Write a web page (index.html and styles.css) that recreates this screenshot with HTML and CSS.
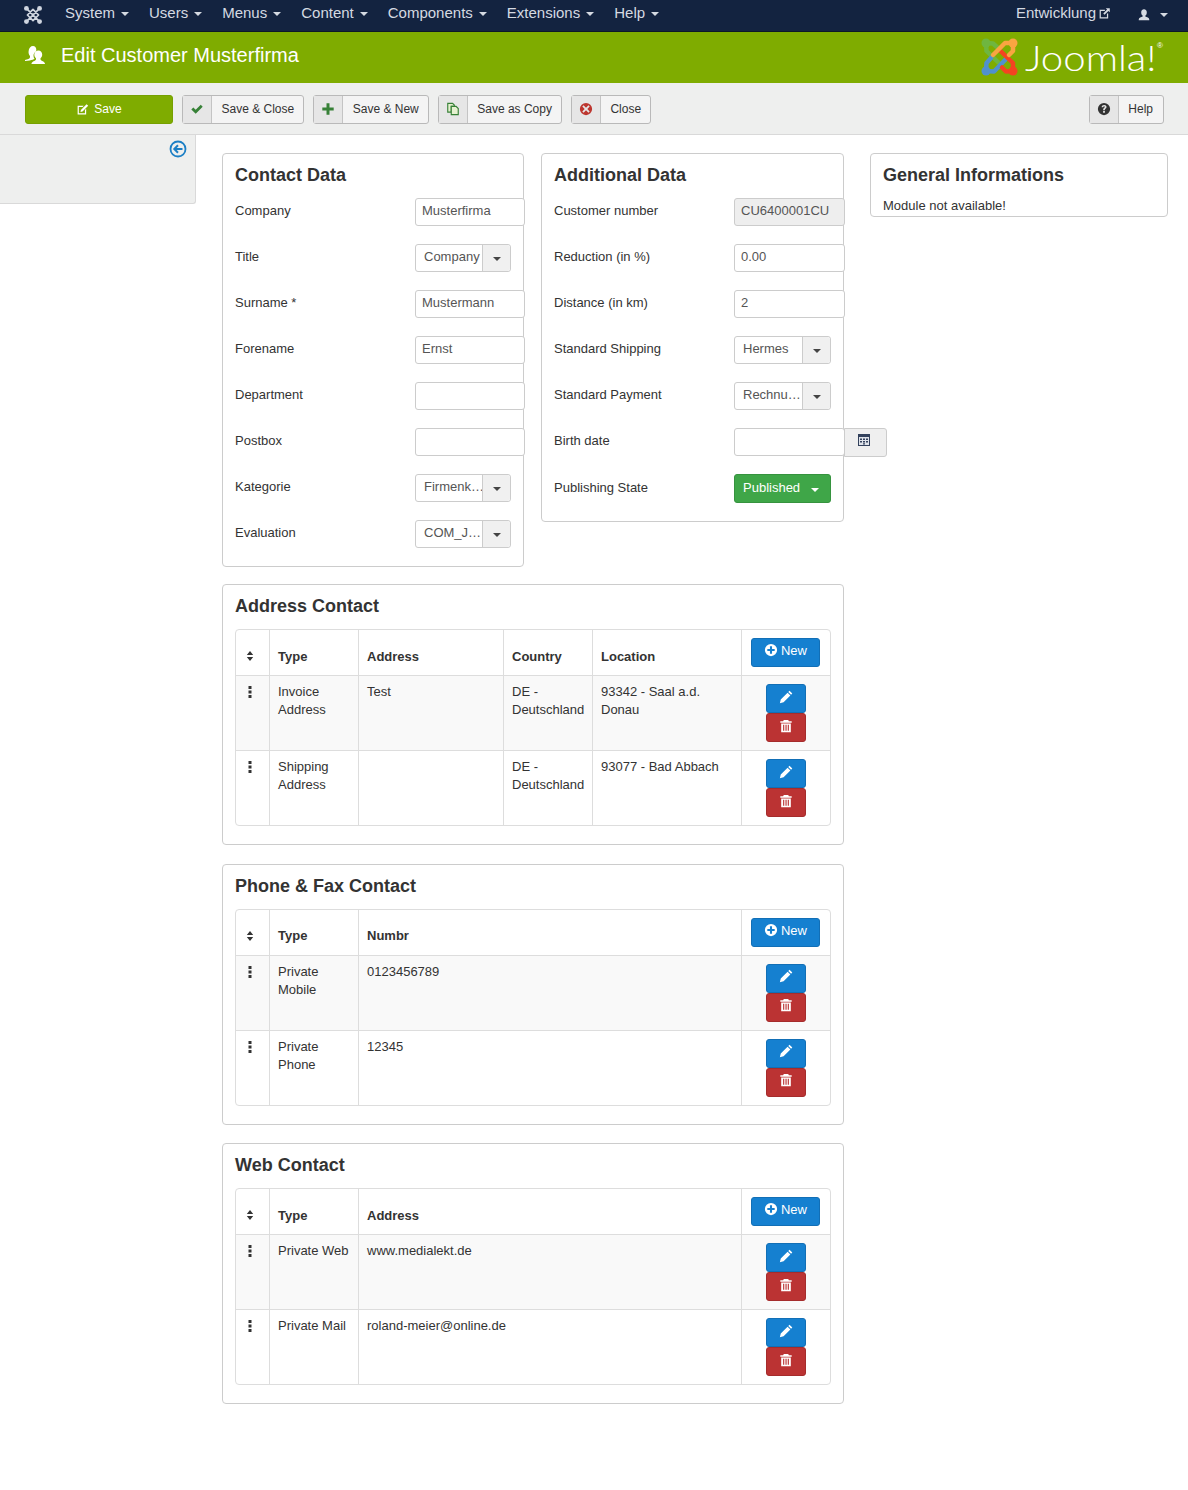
FILE: index.html
```html
<!DOCTYPE html>
<html lang="en">
<head>
<meta charset="utf-8">
<title>Edit Customer Musterfirma</title>
<link rel="stylesheet" href="styles.css">
</head>
<body>
<svg class="defs" aria-hidden="true">
  <symbol id="i-pen" viewBox="0 0 16 16"><path d="M12 .8 15.200 4 13.800 5.400 10.600 2.200zM9.800 3 13 6.200 5.200 14 1 15 2 10.800zM3 11.200 4.800 13 3 13.400 2.600 13z"/></symbol>
  <symbol id="i-trash" viewBox="0 0 16 16"><path d="M5.500 1h5l.8 1.600H14.500V4.200H1.500V2.600H4.700zM2.500 5H13.500V15H2.500zM4.700 6.500V13.500H6V6.500zM7.400 6.500V13.500H8.700V6.500zM10 6.500V13.500H11.300V6.500z" fill-rule="evenodd"/></symbol>
  <symbol id="i-plus-c" viewBox="0 0 16 16"><path fill-rule="evenodd" d="M8 1a7 7 0 1 0 0 14A7 7 0 0 0 8 1zM6.800 3.800H9.200V6.800H12.200V9.200H9.200V12.200H6.800V9.200H3.800V6.800H6.800z"/></symbol>
  <symbol id="i-sort" viewBox="0 0 8 10"><path d="M4 0 7.200 4H.8zM.8 6H7.200L4 10z"/></symbol>
  <symbol id="i-drag" viewBox="0 0 4 12"><rect x=".5" y="0" width="3" height="3"/><rect x=".5" y="4.500" width="3" height="3"/><rect x=".5" y="9" width="3" height="3"/></symbol>
  <symbol id="i-edit" viewBox="0 0 16 16"><path d="M2 3.500H9.500L8 5H3.500V12.500H11V8.500L12.500 7V14H2z"/><path d="M13 1.500 15 3.500 8 10.500 5.500 11 6 8.500z"/></symbol>
  <symbol id="i-user" viewBox="0 0 16 16"><path d="M8 1.500c2 0 3.200 1.500 3.200 3.500 0 1.500-.7 3-1.700 3.700v1c1.700.6 4.500 1.200 4.500 3.300v1H2v-1c0-2.100 2.800-2.700 4.500-3.300v-1C5.500 8 4.800 6.500 4.800 5c0-2 1.200-3.500 3.200-3.500z"/></symbol>
</svg>

<nav class="topnav">
  <div class="nav-brand">
    <svg class="nav-logo" viewBox="0 0 37 37" fill="none" stroke="#cfd5df" stroke-width="3.500" stroke-linejoin="round">
      <path d="M5 5 32 32M32 5 5 32M18.500 7 30 18.500 18.500 30 7 18.500z"/>
      <g fill="#cfd5df" stroke="none"><circle cx="5" cy="5" r="5"/><circle cx="32" cy="5" r="5"/><circle cx="5" cy="32" r="5"/><circle cx="32" cy="32" r="5"/></g>
    </svg>
  </div>
  <ul class="nav-menu">
    <li>System<span class="caret"></span></li>
    <li>Users<span class="caret"></span></li>
    <li>Menus<span class="caret"></span></li>
    <li>Content<span class="caret"></span></li>
    <li>Components<span class="caret"></span></li>
    <li>Extensions<span class="caret"></span></li>
    <li>Help<span class="caret"></span></li>
  </ul>
  <div class="nav-right">
    <span class="nav-site">Entwicklung<svg class="nav-ext" viewBox="0 0 16 16"><path d="M2 3.500H8.500V5H3.500V12.500H11V8H12.500V14H2z"/><path d="M9.500 1.500H14.500V6.500L12.800 4.800 8 9.500 6.500 8 11.200 3.200z"/></svg></span>
    <span class="nav-user"><svg class="nav-user-icon"><use href="#i-user"/></svg><span class="caret"></span></span>
  </div>
</nav>

<header class="titlebar">
  <h1 class="page-title">
    <svg class="title-icon" viewBox="0 0 20 19"><path d="M8 0c2 0 3.300 1.500 3.300 3.700 0 .6-.1 1.200-.3 1.700-1.500.6-2.500 2.300-2.500 4.300 0 1.200.4 2.300 1 3.100-.5.400-1 .6-1.800.9-1.500.5-4 1-7.700 1.300v-1c2.500-.8 5-1.300 5-2.800v-1.200C3.800 9 3.400 7 3.600 5.300 3.800 2 5.700 0 8 0z"/><path d="M13.500 4.500c2.200 0 3.700 1.800 3.700 4 0 1.600-.7 3-1.700 3.800v1.300c.5 1.500 4.500 2 4.500 4.400H6.500c0-2.400 4-2.900 4.500-4.400v-1.300c-1-.8-1.700-2.200-1.700-3.800 0-2.200 1.800-4 4.200-4z"/></svg>
    Edit Customer Musterfirma
  </h1>
  <div class="joomla-logo">
    <svg class="logo-mark" viewBox="0 0 37 39" fill="none" stroke-width="4.500" stroke-linecap="round" stroke-linejoin="round">
      <path stroke="#6fb63f" d="M5 5 5.500 13 18 25M5 5 12 5.500 17 10"/>
      <path stroke="#5091cd" d="M5 33 13 33.500 25 21M5 33 5.500 25 10 20"/>
      <path stroke="#f44321" d="M32 33 32 25 19 12.500M32 33 25 33.500 21 29.500"/>
      <path stroke="#f9a541" d="M32 5 24 5 12 17M32 5 32 13 28 17"/>
      <circle cx="5" cy="5" r="4.500" fill="#6fb63f"/>
      <circle cx="5" cy="33" r="4.500" fill="#5091cd"/>
      <circle cx="32" cy="33" r="4.500" fill="#f44321"/>
      <circle cx="32" cy="5" r="4.500" fill="#f9a541"/>
    </svg>
    <span class="logo-word">Joomla!</span><span class="logo-reg">®</span>
  </div>
</header>

<div class="toolbar">
  <button class="tb-save"><svg class="ico14"><use href="#i-edit"/></svg>Save</button>
  <button class="tb-btn"><span class="tb-ico"><svg class="ico14 green" viewBox="0 0 16 16"><path d="M1.500 8.500 3.800 6.200 6.500 8.900 12.300 3 14.500 5.300 6.500 13.300z"/></svg></span>Save &amp; Close</button>
  <button class="tb-btn"><span class="tb-ico"><svg class="ico14 green" viewBox="0 0 16 16"><path d="M6.300 1.500H9.700V6.300H14.500V9.700H9.700V14.500H6.300V9.700H1.500V6.300H6.300z"/></svg></span>Save &amp; New</button>
  <button class="tb-btn"><span class="tb-ico"><svg class="ico14 outline" viewBox="0 0 16 16"><path d="M2 1.500H7.500L9.500 3.500V5H6V11.500H2z"/><path d="M6 5H11.500L14 7.500V14.500H6z"/></svg></span>Save as Copy</button>
  <button class="tb-btn"><span class="tb-ico"><svg class="ico14 red" viewBox="0 0 16 16"><path fill-rule="evenodd" d="M8 1a7 7 0 1 0 0 14A7 7 0 0 0 8 1zM5.200 3.800 8 6.500 10.800 3.800 12.200 5.200 9.500 8 12.200 10.800 10.800 12.200 8 9.500 5.200 12.200 3.800 10.800 6.500 8 3.800 5.200z"/></svg></span>Close</button>
  <button class="tb-btn tb-help"><span class="tb-ico"><svg class="ico14 dark" viewBox="0 0 16 16"><path fill-rule="evenodd" d="M8 1a7 7 0 1 0 0 14A7 7 0 0 0 8 1zM5.300 5.900C5.400 4.200 6.600 3.300 8.200 3.300c1.500 0 2.700.9 2.700 2.400 0 1.800-2 1.900-2 3.300H7c0-2.400 1.900-2.300 1.900-3.300 0-.5-.3-.8-.8-.8-.6 0-.9.400-1 1zM7 10H9V12.200H7z"/></svg></span>Help</button>
</div>

<div class="layout">
  <aside class="sidebar">
    <svg class="sidebar-toggle" viewBox="0 0 18 18" fill="none" stroke="#1c7fc5"><circle cx="9" cy="9" r="7.500" stroke-width="1.800"/><path d="M13.500 9H6M9 5.300 5.300 9 9 12.700" stroke-width="2"/></svg>
  </aside>

  <main class="main">
    <div class="left-col">
      <div class="top-cards">
        <section class="card card-contact">
          <h2 class="card-title">Contact Data</h2>
          <div class="form-row"><label class="lbl">Company</label><input class="inp" value="Musterfirma"></div>
          <div class="form-row"><label class="lbl">Title</label><div class="sel"><span class="sel-text">Company</span><span class="sel-arrow"><span class="caret dark"></span></span></div></div>
          <div class="form-row"><label class="lbl">Surname *</label><input class="inp" value="Mustermann"></div>
          <div class="form-row"><label class="lbl">Forename</label><input class="inp" value="Ernst"></div>
          <div class="form-row"><label class="lbl">Department</label><input class="inp" value=""></div>
          <div class="form-row"><label class="lbl">Postbox</label><input class="inp" value=""></div>
          <div class="form-row"><label class="lbl">Kategorie</label><div class="sel"><span class="sel-text">Firmenk…</span><span class="sel-arrow"><span class="caret dark"></span></span></div></div>
          <div class="form-row"><label class="lbl">Evaluation</label><div class="sel"><span class="sel-text">COM_J…</span><span class="sel-arrow"><span class="caret dark"></span></span></div></div>
        </section>

        <section class="card card-short">
          <h2 class="card-title">Additional Data</h2>
          <div class="form-row"><label class="lbl">Customer number</label><input class="inp inp-disabled" value="CU6400001CU" disabled></div>
          <div class="form-row"><label class="lbl">Reduction (in %)</label><input class="inp" value="0.00"></div>
          <div class="form-row"><label class="lbl">Distance (in km)</label><input class="inp" value="2"></div>
          <div class="form-row"><label class="lbl">Standard Shipping</label><div class="sel"><span class="sel-text">Hermes</span><span class="sel-arrow"><span class="caret dark"></span></span></div></div>
          <div class="form-row"><label class="lbl">Standard Payment</label><div class="sel"><span class="sel-text">Rechnu…</span><span class="sel-arrow"><span class="caret dark"></span></span></div></div>
          <div class="form-row"><label class="lbl">Birth date</label><input class="inp" value=""><span class="cal-btn"><svg class="cal-icon" viewBox="0 0 14 14"><path fill="#33415c" d="M1 1H13V13H1z"/><path fill="#dfe3ea" d="M2 4H12V12H2z"/><path fill="#33415c" d="M3 5.500H5V7H3zM6 5.500H8V7H6zM9 5.500H11V7H9zM3 8H5V9.500H3zM6 8H8V9.500H6zM9 8H11V9.500H9zM6 10.300H8V11.500H6z"/></svg></span></div>
          <div class="form-row form-row-last"><label class="lbl">Publishing State</label><div class="state-btn">Published<span class="caret"></span></div></div>
        </section>
      </div>

      <section class="card section">
        <h2 class="card-title">Address Contact</h2>
        <table class="grid">
          <colgroup><col class="c-h"><col class="c-t"><col class="c-addr"><col class="c-t"><col class="c-loc"><col class="c-a"></colgroup>
          <thead><tr><th class="center"><svg class="sort"><use href="#i-sort"/></svg></th><th>Type</th><th>Address</th><th>Country</th><th>Location</th><th class="center"><button class="btn-new"><svg class="ico13"><use href="#i-plus-c"/></svg>New</button></th></tr></thead>
          <tbody>
            <tr><td class="center"><svg class="drag"><use href="#i-drag"/></svg></td><td>Invoice Address</td><td>Test</td><td>DE - Deutschland</td><td>93342 - Saal a.d. Donau</td><td class="center"><button class="btn-edit"><svg class="ico14"><use href="#i-pen"/></svg></button><button class="btn-del"><svg class="ico14"><use href="#i-trash"/></svg></button></td></tr>
            <tr><td class="center"><svg class="drag"><use href="#i-drag"/></svg></td><td>Shipping Address</td><td></td><td>DE - Deutschland</td><td>93077 - Bad Abbach</td><td class="center"><button class="btn-edit"><svg class="ico14"><use href="#i-pen"/></svg></button><button class="btn-del"><svg class="ico14"><use href="#i-trash"/></svg></button></td></tr>
          </tbody>
        </table>
      </section>

      <section class="card section">
        <h2 class="card-title">Phone &amp; Fax Contact</h2>
        <table class="grid">
          <colgroup><col class="c-h"><col class="c-t"><col><col class="c-a"></colgroup>
          <thead><tr><th class="center"><svg class="sort"><use href="#i-sort"/></svg></th><th>Type</th><th>Numbr</th><th class="center"><button class="btn-new"><svg class="ico13"><use href="#i-plus-c"/></svg>New</button></th></tr></thead>
          <tbody>
            <tr><td class="center"><svg class="drag"><use href="#i-drag"/></svg></td><td>Private Mobile</td><td>0123456789</td><td class="center"><button class="btn-edit"><svg class="ico14"><use href="#i-pen"/></svg></button><button class="btn-del"><svg class="ico14"><use href="#i-trash"/></svg></button></td></tr>
            <tr><td class="center"><svg class="drag"><use href="#i-drag"/></svg></td><td>Private Phone</td><td>12345</td><td class="center"><button class="btn-edit"><svg class="ico14"><use href="#i-pen"/></svg></button><button class="btn-del"><svg class="ico14"><use href="#i-trash"/></svg></button></td></tr>
          </tbody>
        </table>
      </section>

      <section class="card section">
        <h2 class="card-title">Web Contact</h2>
        <table class="grid">
          <colgroup><col class="c-h"><col class="c-t"><col><col class="c-a"></colgroup>
          <thead><tr><th class="center"><svg class="sort"><use href="#i-sort"/></svg></th><th>Type</th><th>Address</th><th class="center"><button class="btn-new"><svg class="ico13"><use href="#i-plus-c"/></svg>New</button></th></tr></thead>
          <tbody>
            <tr><td class="center"><svg class="drag"><use href="#i-drag"/></svg></td><td>Private Web</td><td>www.medialekt.de</td><td class="center"><button class="btn-edit"><svg class="ico14"><use href="#i-pen"/></svg></button><button class="btn-del"><svg class="ico14"><use href="#i-trash"/></svg></button></td></tr>
            <tr><td class="center"><svg class="drag"><use href="#i-drag"/></svg></td><td>Private Mail</td><td>roland-meier@online.de</td><td class="center"><button class="btn-edit"><svg class="ico14"><use href="#i-pen"/></svg></button><button class="btn-del"><svg class="ico14"><use href="#i-trash"/></svg></button></td></tr>
          </tbody>
        </table>
      </section>
    </div>

    <div class="right-col">
      <section class="card card-info">
        <h2 class="card-title">General Informations</h2>
        <p class="info-text">Module not available!</p>
      </section>
    </div>
  </main>
</div>
</body>
</html>
```
FILE: styles.css
```css
* { box-sizing: border-box; }
html, body { margin: 0; padding: 0; }
body {
  font-family: "Liberation Sans", Arial, sans-serif;
  font-size: 13px;
  line-height: 18px;
  color: #333;
  background: #fff;
}
.defs { position: absolute; width: 0; height: 0; overflow: hidden; }

.caret {
  display: inline-block;
  width: 0;
  height: 0;
  margin-left: 6px;
  vertical-align: middle;
  border-left: 4px solid transparent;
  border-right: 4px solid transparent;
  border-top: 4px solid #d5dae2;
}
.caret.dark { border-top-color: #444; margin-left: 0; }

/* top nav */
.topnav {
  height: 32px;
  background: #132340;
  color: #d5dae2;
  font-size: 15px;
  display: flex;
  align-items: center;
  border-bottom: 1px solid #0c1729;
}
.nav-brand { width: 55px; display: flex; justify-content: center; padding: 0 2px 2px 12px; }
.nav-logo { width: 18px; height: 18px; }
.nav-menu { list-style: none; display: flex; margin: 0; padding: 0; flex: 1; }
.nav-menu li { padding: 0 10px; margin-top: -5px; line-height: 32px; white-space: nowrap; }
.nav-right { display: flex; align-items: center; padding-right: 20px; margin-top: -5px; }
.nav-site { display: flex; align-items: center; }
.nav-ext { width: 13px; height: 13px; margin-left: 2px; fill: #d5dae2; }
.nav-user { display: flex; align-items: center; margin-left: 26px; margin-top: 3px; }
.nav-user-icon { width: 14px; height: 14px; fill: #d5dae2; }
.nav-user .caret { margin-left: 9px; }

/* green title bar */
.titlebar {
  height: 51px;
  background: #7fac00;
  display: flex;
  align-items: center;
  justify-content: space-between;
  padding: 0 25px 0 25px;
}
.page-title {
  margin: 0 0 5px;
  font-size: 20px;
  font-weight: 400;
  color: #fff;
  display: flex;
  align-items: center;
}
.title-icon { width: 20px; height: 19px; margin-right: 16px; fill: #fff; }
.joomla-logo { display: flex; align-items: center; color: #fff; position: relative; padding-right: 6px; margin-bottom: 1px; }
.logo-mark { width: 37px; height: 39px; margin-right: 7px; }
.logo-word {
  display: inline-block;
  margin-right: 14px;
  font-family: Lato, sans-serif;
  font-weight: 300;
  font-size: 36px;
  line-height: 40px;
  transform: scaleX(1.115);
  transform-origin: left center;
}
.logo-reg { position: absolute; right: 0; top: 5px; font-size: 8px; line-height: 8px; }

/* toolbar */
.toolbar {
  height: 52px;
  background: #eeefee;
  border-bottom: 1px solid #d9d9d9;
  display: flex;
  align-items: center;
  gap: 9px;
  padding: 1px 24px 0 25px;
}
.toolbar button { font-family: inherit; font-size: 12px; cursor: pointer; }
.tb-save {
  width: 148px;
  height: 29px;
  background: #7fac00;
  color: #fff;
  border: 1px solid #76a000;
  border-radius: 3px;
  display: flex;
  align-items: center;
  justify-content: center;
}
.tb-save .ico14 { width: 13px; height: 13px; margin-right: 5px; fill: #fff; }
.tb-btn {
  height: 29px;
  padding: 0 9px 0 0;
  background: #f4f4f4;
  color: #333;
  border: 1px solid #b9b9b9;
  border-radius: 3px;
  display: flex;
  align-items: center;
}
.tb-ico {
  width: 29px;
  height: 27px;
  margin-right: 9.500px;
  background: #e6e6e6;
  border-right: 1px solid #c4c4c4;
  display: flex;
  align-items: center;
  justify-content: center;
}
.tb-help { margin-left: auto; padding-right: 10px; }
.ico14 { width: 14px; height: 14px; fill: #fff; }
.ico13 { width: 14px; height: 14px; fill: #fff; margin-right: 3px; vertical-align: -2px; }
.green { fill: #378137; }
.outline { fill: #e6f1d0; stroke: #378137; stroke-width: 1.300; }
.red { fill: #bd362f; }
.dark { fill: #333; }

/* layout */
.layout { display: flex; align-items: flex-start; padding-bottom: 86px; }
.sidebar {
  width: 196px;
  height: 69px;
  flex: none;
  background: #eeefee;
  border-right: 1px solid #d9d9d9;
  border-bottom: 1px solid #d9d9d9;
  border-bottom-right-radius: 3px;
  display: flex;
  justify-content: flex-end;
  padding: 5px 8px 0 0;
}
.sidebar-toggle { width: 18px; height: 18px; }
.main { flex: 1; display: flex; gap: 26px; padding: 18px 20px 0 26px; align-items: flex-start; }
.left-col { width: 622px; flex: none; display: flex; flex-direction: column; gap: 18.500px; }
.right-col { flex: 1; min-width: 0; }
.top-cards { display: grid; grid-template-columns: 302px 303px; column-gap: 17px; align-items: start; margin-bottom: -1.500px; }

.card {
  border: 1px solid #ccc;
  border-radius: 4px;
  background: #fff;
  padding: 0 12px;
}
.card-title { margin: 0; height: 44px; font-size: 18px; line-height: 42px; font-weight: 700; color: #333; }
.section { padding-bottom: 18px; }
.info-text { margin: 0; padding-bottom: 2px; line-height: 18px; margin-top: -1px; }
.card-info { height: 64px; }

/* form */
.form-row { display: flex; align-items: flex-start; height: 46px; }
.form-row-last { height: 47px; }
.form-row-last .lbl { padding-top: 4px; }
.lbl { width: 180px; flex: none; padding-top: 3px; line-height: 20px; }
.inp {
  width: 110px;
  height: 28px;
  flex: none;
  border: 1px solid #ccc;
  border-radius: 3px;
  padding: 0 6px 4px;
  font-family: inherit;
  font-size: 13px;
  color: #555;
  background: #fff;
  margin: 0;
}
.card-short .inp { width: 111px; }
.inp-disabled { background: #eee; opacity: 1; -webkit-text-fill-color: #555; }
.sel {
  width: 96px;
  height: 28px;
  flex: none;
  display: flex;
  border: 1px solid #ccc;
  border-radius: 3px;
  color: #555;
  background: #fff;
}
.card-short .sel { width: 97px; }
.sel-text {
  flex: 1;
  min-width: 0;
  padding: 0 0 0 8px;
  line-height: 23px;
  white-space: nowrap;
}
.sel-arrow {
  width: 28px;
  flex: none;
  display: flex;
  align-items: center;
  justify-content: center;
  background: #f0f0f0;
  border-left: 1px solid #ccc;
  border-radius: 0 3px 3px 0;
}
.sel-arrow .caret { margin-top: 1px; }
.cal-btn {
  width: 43px;
  height: 29px;
  flex: none;
  margin-left: -1px;
  background: #efefef;
  border: 1px solid #ccc;
  border-radius: 0 3px 3px 0;
  display: flex;
  align-items: center;
  justify-content: center;
  padding: 0 4px 6px 0;
}
.cal-icon { width: 14px; height: 14px; }
.state-btn {
  width: 97px;
  height: 29px;
  background: #3fa648;
  border: 1px solid #36933f;
  border-radius: 3px;
  color: #fff;
  padding-left: 8px;
  line-height: 25px;
  white-space: nowrap;
}
.state-btn .caret { margin-left: 11px; margin-top: 3px; border-top-color: #fff; }

/* tables */
.grid {
  width: 596px;
  table-layout: fixed;
  border-collapse: separate;
  border-spacing: 0;
  border: 1px solid #ddd;
  border-radius: 4px;
}
.c-h { width: 33px; }
.c-t { width: 89px; }
.c-addr { width: 145px; }
.c-loc { width: 149px; }
.c-a { width: 89px; }
.grid th, .grid td { padding: 8px; text-align: left; border-left: 1px solid #ddd; }
.grid td { padding-top: 7px; }
.grid td.center { padding-top: 8px; }
.grid th:first-child, .grid td:first-child { border-left: 0; padding: 8px 5px 8px 0; }
.grid th { height: 45px; vertical-align: middle; font-weight: 700; padding-top: 16px; padding-bottom: 8px; }
.grid .center { text-align: center; }
.grid th.center { padding-top: 8px; padding-bottom: 8px; vertical-align: top; }
.grid th:last-child.center { text-align: left; padding-left: 9px; padding-right: 0; }
.grid th:first-child.center { padding-top: 21px; padding-bottom: 0; }
.grid td { height: 75px; vertical-align: top; border-top: 1px solid #ddd; }
.grid tbody tr:nth-child(odd) td { background: #f9f9f9; }
.sort { width: 8px; height: 10px; fill: #333; display: block; margin: 0 auto; }
.drag { width: 4px; height: 12px; fill: #333; display: block; margin: 2px auto 0; }
.btn-new {
  display: block;
  width: 69px;
  height: 29px;
  padding: 0 0 3px;
  margin: 0;
  background: #1580d0;
  border: 1px solid #126fb6;
  border-radius: 3px;
  color: #fff;
  font-family: inherit;
  font-size: 13px;
  line-height: 18px;
}
.btn-edit, .btn-del {
  display: block;
  width: 40px;
  height: 29px;
  margin: 0 auto;
  padding: 0 0 5px;
  border-radius: 3px;
  border: 1px solid transparent;
}
.btn-edit { background: #1580d0; border-color: #126fb6; }
.btn-del { background: #bb3333; border-color: #a52c2c; }
.btn-edit svg, .btn-del svg { vertical-align: middle; }
```
